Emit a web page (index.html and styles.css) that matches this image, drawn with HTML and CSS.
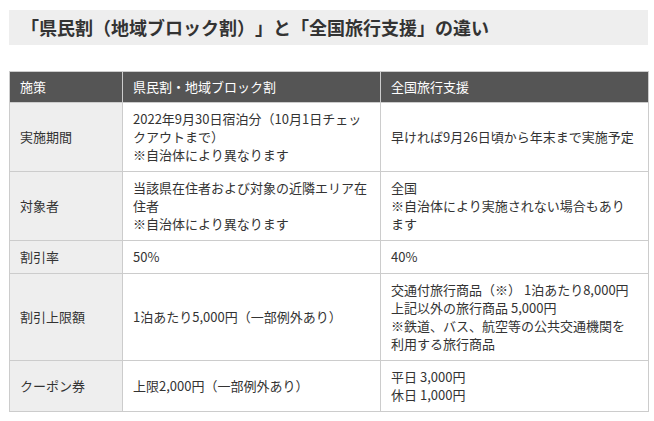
FILE: index.html
```html
<!DOCTYPE html>
<html lang="ja">
<head>
<meta charset="utf-8">
<title>県民割と全国旅行支援の違い</title>
<link rel="stylesheet" href="styles.css">
</head>
<body>
<div class="page">
  <h2 class="title">「県民割（地域ブロック割）」と「全国旅行支援」の違い</h2>
  <table class="compare">
    <colgroup>
      <col class="c1">
      <col class="c2">
      <col class="c3">
    </colgroup>
    <thead>
      <tr><th>施策</th><th>県民割・地域ブロック割</th><th>全国旅行支援</th></tr>
    </thead>
    <tbody>
      <tr>
        <td class="label">実施期間</td>
        <td>2022年9月30日宿泊分（10月1日チェックアウトまで）<br>※自治体により異なります</td>
        <td>早ければ9月26日頃から年末まで実施予定</td>
      </tr>
      <tr>
        <td class="label">対象者</td>
        <td>当該県在住者および対象の近隣エリア在住者<br>※自治体により異なります</td>
        <td>全国<br>※自治体により実施されない場合もあります</td>
      </tr>
      <tr>
        <td class="label">割引率</td>
        <td>50%</td>
        <td>40%</td>
      </tr>
      <tr>
        <td class="label">割引上限額</td>
        <td>1泊あたり5,000円（一部例外あり）</td>
        <td>交通付旅行商品（※） 1泊あたり8,000円<br>上記以外の旅行商品 5,000円<br>※鉄道、バス、航空等の公共交通機関を利用する旅行商品</td>
      </tr>
      <tr>
        <td class="label">クーポン券</td>
        <td>上限2,000円（一部例外あり）</td>
        <td>平日 3,000円<br>休日 1,000円</td>
      </tr>
    </tbody>
  </table>
</div>
</body>
</html>
```

FILE: styles.css
```css
html, body {
  margin: 0;
  padding: 0;
  background: #ffffff;
}

body {
  font-family: "Noto Sans CJK JP", "Noto Sans", sans-serif;
  color: #333333;
  text-spacing-trim: space-all;
}

.page {
  width: 639px;
  padding: 10px 0 0 9px;
}

.title {
  margin: 0 0 26px 0;
  height: 35px;
  padding: 0 0 0 12px;
  background: #eeeeee;
  font-size: 18px;
  font-weight: bold;
  line-height: 35px;
  color: #333333;
  letter-spacing: 0;
}

.compare {
  width: 639px;
  table-layout: fixed;
  border-collapse: collapse;
  font-size: 13px;
  line-height: 18px;
}

.c1 { width: 113px; }
.c2 { width: 258px; }
.c3 { width: 268px; }

.compare th,
.compare td {
  border: 1px solid #cccccc;
  text-align: left;
  vertical-align: middle;
}

.compare th {
  background: #555555;
  color: #ffffff;
  font-weight: normal;
  padding: 6px 10px;
}

.compare td {
  padding: 7px 12px 7px 10px;
  color: #333333;
}

.compare td.label {
  background: #eeeeee;
}
```
